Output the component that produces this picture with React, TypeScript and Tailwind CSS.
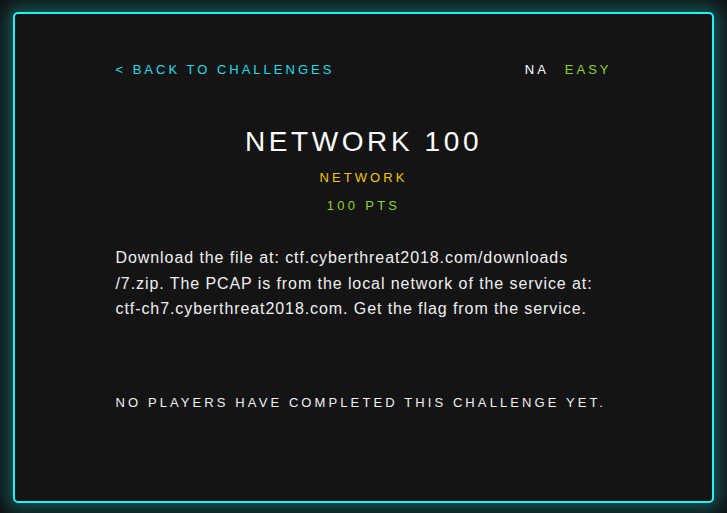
import React from 'react';

const font = { fontFamily: '"Liberation Sans", Arial, sans-serif' };

export default function App() {
  return (
    <div className="w-[727px] h-[513px] bg-[#101414] pt-[12px] pl-[13px]" style={font}>
      <div className="w-[701px] h-[491px] rounded-[5px] border-2 border-[#1ef2f7] bg-[#141414] shadow-[0_0_16px_6px_rgba(30,215,220,0.32)]">
        <div className="w-[496px] mx-auto pt-[46px]">
          <div className="flex items-center justify-between h-[20px] text-[13px] tracking-[3px]">
            <a className="text-[#1fdeec]">&lt; BACK TO CHALLENGES</a>
            <div className="flex gap-[16px]">
              <span className="text-white">NA</span>
              <span className="text-[#8fd12f]">EASY</span>
            </div>
          </div>

          <h1 className="mt-[45px] text-center text-white text-[28px] leading-[34px] tracking-[3.6px]">NETWORK 100</h1>
          <div className="mt-[9px] text-center text-[#f5c400] text-[13px] leading-[20px] tracking-[3.1px]">NETWORK</div>
          <div className="mt-[8px] text-center text-[#8fd12f] text-[13px] leading-[20px] tracking-[3.3px]">100 PTS</div>

          <p className="mt-[29px] text-[#f0f0f0] text-[16px] leading-[25.5px] tracking-[0.92px] whitespace-nowrap">
            Download the file at: ctf.cyberthreat2018.com/downloads
            <br />
            /7.zip. The PCAP is from the local network of the service at:
            <br />
            ctf-ch7.cyberthreat2018.com. Get the flag from the service.
          </p>

          <div className="mt-[71px] text-[#f0f0f0] text-[13px] leading-[20px] tracking-[3.1px] whitespace-nowrap">
            NO PLAYERS HAVE COMPLETED THIS CHALLENGE YET.
          </div>
        </div>
      </div>
    </div>
  );
}
